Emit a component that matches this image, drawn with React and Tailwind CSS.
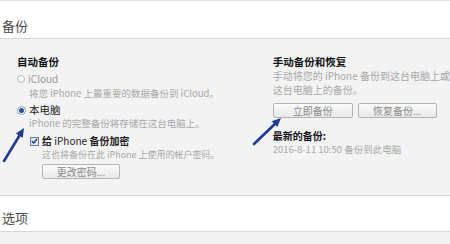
import React from "react";

const font = { fontFamily: '"Noto Sans CJK SC", "Noto Sans", sans-serif' };

function Btn({ children, className = "" }) {
  return (
    <div
      className={
        "h-[15px] flex items-center justify-center border border-[#b4b4b4] rounded-[2px] bg-gradient-to-b from-[#fbfbfb] to-[#e9e9e9] text-[10px] leading-none text-[#8a8a8a] " +
        className
      }
    >
      {children}
    </div>
  );
}

export default function App() {
  return (
    <div
      className="relative w-[450px] h-[244px] overflow-hidden bg-white border-t border-[#e2e2e2]"
      style={font}
    >
      <div className="h-[37px] flex items-end pl-[2px] pb-[4px] text-[13px] leading-[16px] text-[#4a4a4a]">
        备份
      </div>
      <div className="h-[158px] bg-[#f3f3f3] border-t border-b border-[#d6d6d6] flex pl-[17px]">
        <div className="w-[262px] pt-[16px] flex flex-col">
          <div className="h-[14px] leading-[14px] text-[10.5px] font-bold text-[#111]">自动备份</div>
          <div className="mt-[4px] h-[12px] flex items-center">
            <span className="w-[8px] h-[8px] rounded-full border border-[#b8b8b8] bg-white" />
            <span className="ml-[3px] text-[10px] leading-[10px] text-[#9a9a9a]">iCloud</span>
          </div>
          <div className="ml-[12px] h-[13px] leading-[10px] pt-[3px] text-[9.5px] text-[#a8a8a8] whitespace-nowrap">
            将您 iPhone 上最重要的数据备份到 iCloud。
          </div>
          <div className="mt-[5px] h-[14px] flex items-center">
            <span className="w-[9px] h-[9px] rounded-full border border-[#7f9cc8] bg-white flex items-center justify-center">
              <span className="w-[5px] h-[5px] rounded-full bg-[#2d4f8f]" />
            </span>
            <span className="ml-[3px] text-[10.5px] leading-[12px] text-[#222]">本电脑</span>
          </div>
          <div className="ml-[12px] h-[12px] leading-[11px] pt-[1px] text-[9.5px] text-[#a8a8a8] whitespace-nowrap">
            iPhone 的完整备份将存储在这台电脑上。
          </div>
          <div className="mt-[5px] ml-[13px] h-[14px] flex items-center">
            <span className="w-[9px] h-[9px] border border-[#6a7fa8] bg-[#dfe6f3] flex items-center justify-center">
              <svg width="8" height="8" viewBox="0 0 8 8">
                <path d="M1 4.2 L3.2 6.3 L7 1.5" stroke="#22397a" strokeWidth="1.6" fill="none" />
              </svg>
            </span>
            <span className="ml-[3px] text-[10px] leading-[12px] font-bold text-[#222]">
              给 <span className="font-normal">iPhone</span> 备份加密
            </span>
          </div>
          <div className="ml-[25px] h-[12px] leading-[10px] pt-[2px] text-[9px] text-[#a8a8a8] whitespace-nowrap">
            这也将备份在此 iPhone 上使用的帐户密码。
          </div>
          <div className="mt-[4px] ml-[25px]">
            <Btn className="w-[78px]">更改密码...</Btn>
          </div>
        </div>
        <div className="flex-1 pt-[16px] flex flex-col">
          <div className="h-[14px] leading-[14px] text-[10.5px] font-bold text-[#111]">手动备份和恢复</div>
          <div className="leading-[14px] text-[10px] text-[#a8a8a8] whitespace-nowrap">
            <div>手动将您的 iPhone 备份到这台电脑上或</div>
            <div>这台电脑上的备份。</div>
          </div>
          <div className="mt-[6px] flex gap-[5px]">
            <Btn className="w-[80px]">立即备份</Btn>
            <Btn className="w-[79px]">恢复备份...</Btn>
          </div>
          <div className="mt-[11px] h-[13px] leading-[13px] text-[10px] font-bold text-[#111]">最新的备份:</div>
          <div className="h-[13px] leading-[11px] pt-[2px] text-[9.5px] text-[#a8a8a8] whitespace-nowrap">
            2016-8-11 10:50 备份到此电脑
          </div>
        </div>
      </div>
      <div className="h-[35px] flex items-end pl-[2px] pb-[5px] text-[13px] leading-[16px] text-[#4a4a4a]">
        选项
      </div>
      <div className="h-[20px] bg-[#f3f3f3] border-t border-[#d6d6d6]" />

      <svg className="absolute left-0 top-0 pointer-events-none" width="450" height="244">
        <line x1="4" y1="160" x2="19.5" y2="134.5" stroke="#1d3c8f" strokeWidth="2.6" strokeLinecap="round" />
        <polygon points="24,127 22.8,136.8 15.9,132.6" fill="#1d3c8f" />
        <line x1="254" y1="143" x2="274.6" y2="123.2" stroke="#1d3c8f" strokeWidth="2.6" strokeLinecap="round" />
        <polygon points="281,117 277.3,126.1 271.7,120.3" fill="#1d3c8f" />
      </svg>
    </div>
  );
}
